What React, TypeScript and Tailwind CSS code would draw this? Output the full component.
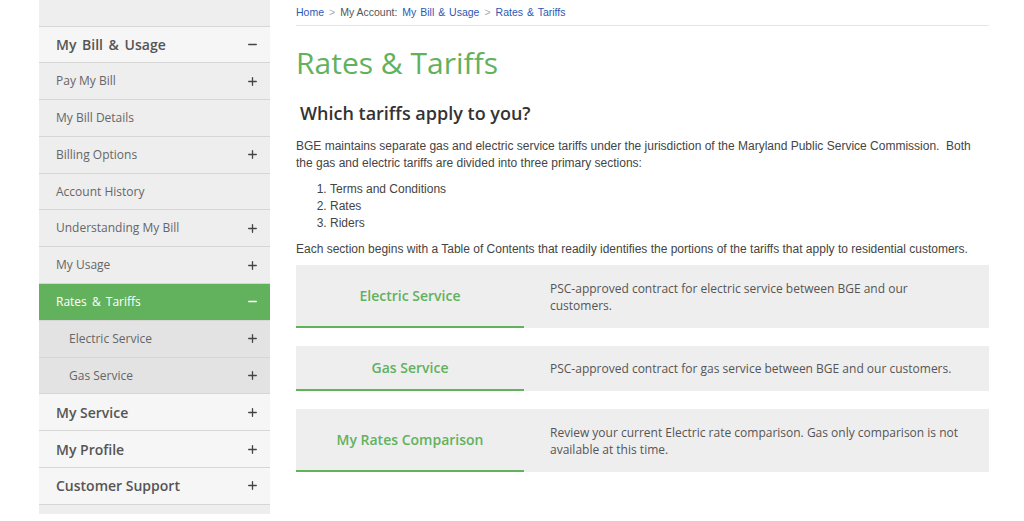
import { Plus, Minus } from 'lucide-react';

const sans = "font-['Open_Sans',sans-serif]";
const arial = "font-['Liberation_Sans',Arial,sans-serif]";

type Item = { label: string; level: 0 | 1 | 2; toggle?: 'plus' | 'minus'; active?: boolean };

const menu: Item[] = [
  { label: 'My Bill & Usage', level: 0, toggle: 'minus' },
  { label: 'Pay My Bill', level: 1, toggle: 'plus' },
  { label: 'My Bill Details', level: 1 },
  { label: 'Billing Options', level: 1, toggle: 'plus' },
  { label: 'Account History', level: 1 },
  { label: 'Understanding My Bill', level: 1, toggle: 'plus' },
  { label: 'My Usage', level: 1, toggle: 'plus' },
  { label: 'Rates & Tariffs', level: 1, toggle: 'minus', active: true },
  { label: 'Electric Service', level: 2, toggle: 'plus' },
  { label: 'Gas Service', level: 2, toggle: 'plus' },
  { label: 'My Service', level: 0, toggle: 'plus' },
  { label: 'My Profile', level: 0, toggle: 'plus' },
  { label: 'Customer Support', level: 0, toggle: 'plus' },
];

const cards = [
  {
    title: 'Electric Service',
    text: 'PSC-approved contract for electric service between BGE and our customers.',
    h: 'h-[63px]',
  },
  {
    title: 'Gas Service',
    text: 'PSC-approved contract for gas service between BGE and our customers.',
    h: 'h-[45px]',
  },
  {
    title: 'My Rates Comparison',
    text: 'Review your current Electric rate comparison. Gas only comparison is not available at this time.',
    h: 'h-[63px]',
  },
];

function MenuRow({ item }: { item: Item }) {
  const bg = item.active
    ? 'bg-[#62b15d] text-white'
    : item.level === 0
    ? 'bg-[#f6f6f6] text-[#555]'
    : item.level === 1
    ? 'bg-[#eeeeee] text-[#666]'
    : 'bg-[#e3e3e3] text-[#666]';
  const text = item.level === 0 ? 'text-[14px] font-semibold' : 'text-[12px]';
  const pad = item.level === 2 ? 'pl-[30px]' : 'pl-[17px]';
  // the "&" labels carry wider spacing in the original
  const spacing = item.label.includes('&') ? '[word-spacing:2px]' : '';
  return (
    <div
      className={`flex h-[36.8px] items-center justify-between border-b border-[#d6d6d6] pr-[11px] ${pad} ${bg}`}
    >
      <span className={`${spacing} ${text}`}>{item.label}</span>
      {item.toggle === 'plus' && <Plus className="h-[13px] w-[13px] text-[#444]" strokeWidth={2.4} />}
      {item.toggle === 'minus' && (
        <Minus className={`h-[13px] w-[13px] ${item.active ? 'text-white' : 'text-[#444]'}`} strokeWidth={2.4} />
      )}
    </div>
  );
}

export default function App() {
  return (
    <div className="flex h-[521px] w-[1024px] overflow-hidden bg-white">
      {/* Sidebar */}
      <aside className={`ml-[39px] w-[231px] shrink-0 self-start ${sans}`}>
        <div className="h-[26.5px] border-b border-[#d6d6d6] bg-[#eeeeee]" />
        {menu.map((item) => (
          <MenuRow key={item.label} item={item} />
        ))}
        <div className="h-[9px] bg-[#eeeeee]" />
      </aside>

      {/* Main */}
      <main className="ml-[26px] w-[693px] shrink-0">
        <div
          className={`flex h-[26px] items-center gap-[5px] border-b border-[#e5e5e5] text-[10.5px] [word-spacing:1px] ${arial}`}
        >
          <span className="text-[#2b59b5]">Home</span>
          <span className="text-[#aaa]">&gt;</span>
          <span className="text-[#555] [word-spacing:0px]">My Account:</span>
          <span className="text-[#2b59b5]">My Bill &amp; Usage</span>
          <span className="text-[#aaa]">&gt;</span>
          <span className="text-[#2b59b5]">Rates &amp; Tariffs</span>
        </div>

        <h1 className={`mt-[17px] text-[30px] leading-[40px] text-[#62b15d] ${sans}`}>Rates &amp; Tariffs</h1>

        <h2 className={`mt-[18px] pl-[4px] text-[18px] font-semibold leading-[24px] text-[#333] ${sans}`}>
          Which tariffs apply to you?
        </h2>

        <div className={`mt-[13px] text-[12px] leading-[17px] text-[#444] ${arial}`}>
          <p>
            BGE maintains separate gas and electric service tariffs under the jurisdiction of the Maryland Public
            Service Commission.&nbsp; Both the gas and electric tariffs are divided into three primary sections:
          </p>
          <ol className="mt-[9px] list-decimal pl-[34px]">
            <li>Terms and Conditions</li>
            <li>Rates</li>
            <li>Riders</li>
          </ol>
          <p className="mt-[9px]">
            Each section begins with a Table of Contents that readily identifies the portions of the tariffs that apply
            to residential customers.
          </p>
        </div>

        <div className={`mt-[7px] flex flex-col gap-[18px] ${sans}`}>
          {cards.map((c) => (
            <div key={c.title} className={`flex ${c.h} bg-[#eeeeee]`}>
              <div className="flex w-[228px] shrink-0 items-center justify-center border-b-2 border-[#62b15d] pb-[1px] text-[14px] font-semibold text-[#62b15d]">
                {c.title}
              </div>
              <div className="flex flex-1 items-center pl-[26px] pr-[30px] text-[12px] leading-[17px] text-[#555]">
                {c.text}
              </div>
            </div>
          ))}
        </div>
      </main>
    </div>
  );
}
